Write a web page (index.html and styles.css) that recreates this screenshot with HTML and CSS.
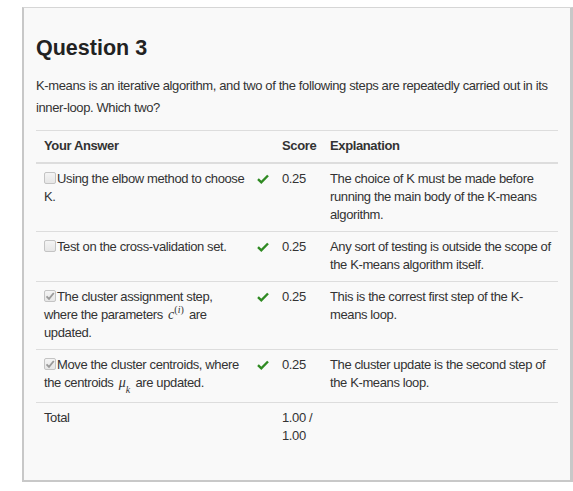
FILE: index.html
```html
<!DOCTYPE html>
<html>
<head>
<meta charset="utf-8">
<link rel="stylesheet" href="styles.css">
</head>
<body>
<div class="quiz">
  <h2 class="q-title">Question 3</h2>
  <p class="q-text">K-means is an iterative algorithm, and two of the following steps are repeatedly carried out in its inner-loop. Which two?</p>
  <table class="results">
    <colgroup>
      <col class="c-ans">
      <col class="c-mark">
      <col class="c-score">
      <col class="c-exp">
    </colgroup>
    <thead>
      <tr><th>Your Answer</th><th class="mark"></th><th>Score</th><th class="exp">Explanation</th></tr>
    </thead>
    <tbody>
      <tr>
        <td><span class="cb"></span>Using the elbow method to choose K.</td>
        <td class="mark"><svg class="ok" viewBox="0 0 12 10" width="12" height="10"><path d="M1 5.2 L4.3 8.3 L11 1.5" fill="none" stroke="#2f8a22" stroke-width="2.4" stroke-linejoin="miter"/></svg></td>
        <td>0.25</td>
        <td class="exp">The choice of K must be made before running the main body of the K-means algorithm.</td>
      </tr>
      <tr>
        <td><span class="cb"></span>Test on the cross-validation set.</td>
        <td class="mark"><svg class="ok" viewBox="0 0 12 10" width="12" height="10"><path d="M1 5.2 L4.3 8.3 L11 1.5" fill="none" stroke="#2f8a22" stroke-width="2.4" stroke-linejoin="miter"/></svg></td>
        <td>0.25</td>
        <td class="exp">Any sort of testing is outside the scope of the K-means algorithm itself.</td>
      </tr>
      <tr>
        <td><span class="cb checked"><svg viewBox="0 0 12 12" width="12" height="12"><path d="M2.5 6.3 L5 8.8 L9.8 3" fill="none" stroke="#9a9a9a" stroke-width="1.8"/></svg></span>The cluster assignment step, where the parameters <span class="math"><i>c</i><sup>(<i>i</i>)</sup></span> are updated.</td>
        <td class="mark"><svg class="ok" viewBox="0 0 12 10" width="12" height="10"><path d="M1 5.2 L4.3 8.3 L11 1.5" fill="none" stroke="#2f8a22" stroke-width="2.4" stroke-linejoin="miter"/></svg></td>
        <td>0.25</td>
        <td class="exp">This is the correst first step of the K-means loop.</td>
      </tr>
      <tr>
        <td><span class="cb checked"><svg viewBox="0 0 12 12" width="12" height="12"><path d="M2.5 6.3 L5 8.8 L9.8 3" fill="none" stroke="#9a9a9a" stroke-width="1.8"/></svg></span>Move the cluster centroids, where the centroids <span class="math"><i>μ</i><sub><i>k</i></sub></span> are updated.</td>
        <td class="mark"><svg class="ok" viewBox="0 0 12 10" width="12" height="10"><path d="M1 5.2 L4.3 8.3 L11 1.5" fill="none" stroke="#2f8a22" stroke-width="2.4" stroke-linejoin="miter"/></svg></td>
        <td>0.25</td>
        <td class="exp">The cluster update is the second step of the K-means loop.</td>
      </tr>
    </tbody>
    <tfoot>
      <tr><td>Total</td><td class="mark"></td><td>1.00 / 1.00</td><td class="exp"></td></tr>
    </tfoot>
  </table>
</div>
</body>
</html>
```

FILE: styles.css
```css
html, body {
  margin: 0;
  padding: 0;
  background: #ffffff;
}

body {
  font-family: "Liberation Sans", Arial, sans-serif;
  font-size: 13px;
  letter-spacing: -0.38px;
  color: #333333;
}

.quiz {
  margin: 7px 0 0 22px;
  background: #f9f9f9;
  border-top: 1px solid #d6d6d6;
  border-left: 2px solid #c8c8c8;
  border-right: 3px solid #c8c8c8;
  border-bottom: 2px solid #c8c8c8;
  padding: 1px 12px 28px 12px;
  width: 522px;
}

.q-title {
  margin: 26px 0 0 0;
  font-size: 21.5px;
  line-height: 26px;
  font-weight: bold;
  letter-spacing: 0;
  color: #222222;
}

.q-text {
  margin: 14px 0 0 0;
  line-height: 22px;
}

.results {
  margin-top: 11px;
  width: 522px;
  border-collapse: collapse;
  table-layout: fixed;
}

.c-ans { width: 220px; }
.c-mark { width: 18px; }
.c-score { width: 48px; }
.c-exp { width: 236px; }

.results th,
.results td {
  text-align: left;
  vertical-align: top;
  padding: 6px 8px 7px 8px;
  line-height: 18px;
  border-top: 1px solid #dddddd;
}

.results th {
  font-weight: bold;
  border-bottom: 2px solid #dddddd;
}

.results .mark {
  padding-left: 1px;
  padding-right: 0;
}

.results .exp {
  padding-right: 4px;
}

.ok {
  display: block;
  margin-top: 4px;
}

.cb {
  display: inline-block;
  box-sizing: border-box;
  width: 12px;
  height: 12px;
  margin-right: 1px;
  vertical-align: -1px;
  border: 1px solid #c4c4c4;
  border-radius: 2px;
  background: linear-gradient(#f4f4f4, #e6e6e6);
  position: relative;
}

.cb svg {
  position: absolute;
  left: -1px;
  top: -1px;
}

.math {
  font-family: "Liberation Serif", "DejaVu Serif", serif;
  font-size: 14px;
  letter-spacing: 0;
  padding: 0 2px;
}

.math sup {
  font-size: 10px;
  line-height: 0;
  vertical-align: 6px;
}

.math sub {
  font-size: 10px;
  line-height: 10px;
  vertical-align: -6px;
}
```
